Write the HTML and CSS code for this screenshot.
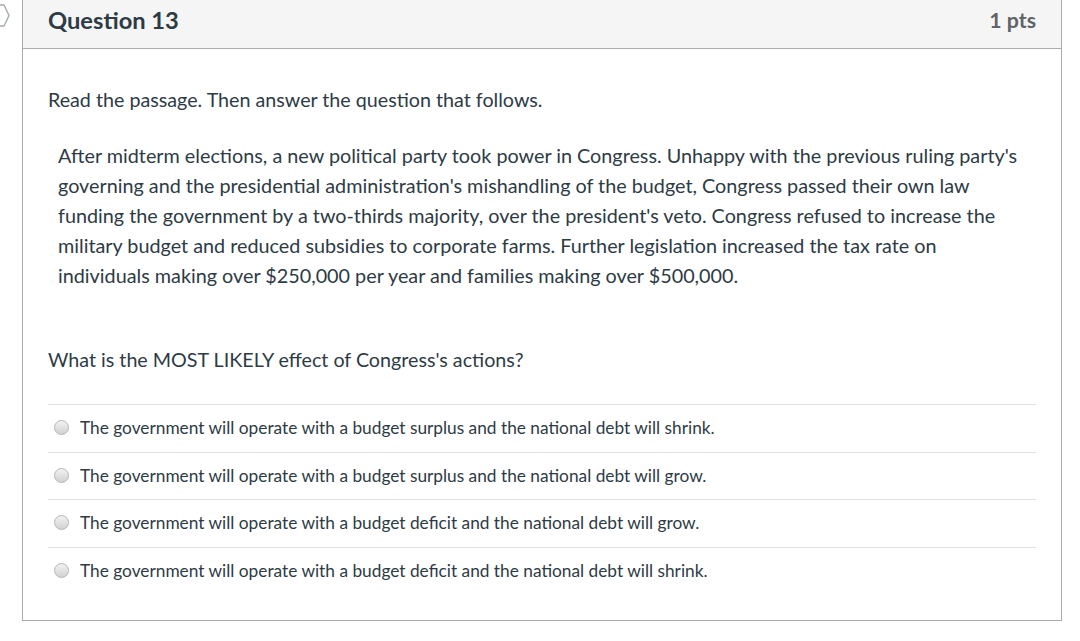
FILE: index.html
```html
<!DOCTYPE html>
<html>
<head>
<meta charset="utf-8">
<link rel="stylesheet" href="styles.css">
</head>
<body>
<div class="page">
  <svg class="nav-icon" width="14" height="32" viewBox="0 0 14 32"><polygon points="-6,5 4,5 9,15.5 4,26 -6,26" fill="none" stroke="#a3abb1" stroke-width="1.4" stroke-linejoin="round"/></svg>
  <div class="card">
    <div class="header">
      <h2 class="title">Question 13</h2>
      <span class="pts">1 pts</span>
    </div>
    <div class="body">
      <p class="intro">Read the passage. Then answer the question that follows.</p>
      <p class="passage">After midterm elections, a new political party took power in Congress. Unhappy with the previous ruling party's governing and the presidential administration's mishandling of the budget, Congress passed their own law funding the government by a two-thirds majority, over the president's veto. Congress refused to increase the military budget and reduced subsidies to corporate farms. Further legislation increased the tax rate on individuals making over $250,000 per year and families making over $500,000.</p>
      <p class="question">What is the MOST LIKELY effect of Congress's actions?</p>
      <div class="answers">
        <label class="answer"><span class="radio"></span>The government will operate with a budget surplus and the national debt will shrink.</label>
        <label class="answer"><span class="radio"></span>The government will operate with a budget surplus and the national debt will grow.</label>
        <label class="answer"><span class="radio"></span>The government will operate with a budget deficit and the national debt will grow.</label>
        <label class="answer last"><span class="radio"></span>The government will operate with a budget deficit and the national debt will shrink.</label>
      </div>
    </div>
  </div>
</div>
</body>
</html>
```
FILE: styles.css
```css
html, body {
  margin: 0;
  padding: 0;
  background: #fff;
}
body {
  font-family: Lato, "Open Sans", sans-serif;
  color: #2d3b45;
}
.page {
  position: relative;
  padding-left: 22px;
  width: 1040px;
}
.nav-icon {
  position: absolute;
  left: 0;
  top: 0;
}
.card {
  border: 1px solid #a9adb0;
  border-top: none;
  width: 1040px;
  height: 621px;
  box-sizing: border-box;
}
.header {
  height: 49px;
  box-sizing: border-box;
  background: #f5f5f5;
  border-bottom: 1px solid #a9adb0;
  display: flex;
  align-items: center;
  justify-content: space-between;
  padding: 0 25px 9px 25px;
}
.title {
  margin: 0;
  font-size: 23.7px;
  font-weight: 700;
  color: #2d3b45;
}
.pts {
  font-size: 21.3px;
  font-weight: 700;
  color: #5f6468;
}
.body {
  padding: 0 25px;
}
.intro {
  margin: 37px 0 0;
  font-size: 19.7px;
  line-height: 28px;
}
.passage {
  margin: 26px 0 0;
  padding-left: 10px;
  padding-right: 12px;
  font-size: 19.8px;
  line-height: 30px;
}
.question {
  margin: 56px 0 0;
  font-size: 19.7px;
  line-height: 28px;
}
.answers {
  margin-top: 30px;
  border-top: 1px solid #dfe2e4;
}
.answer {
  display: flex;
  align-items: center;
  height: 47.7px;
  box-sizing: border-box;
  border-bottom: 1px solid #dfe2e4;
  font-size: 17.3px;
  padding-left: 6px;
  padding-bottom: 2px;
}
.answer.last {
  border-bottom: none;
}
.radio {
  width: 15px;
  height: 15px;
  border-radius: 50%;
  box-sizing: border-box;
  border: 1px solid #b5b5b5;
  background: linear-gradient(#f2f2f2, #d2d2d2);
  margin-right: 11px;
  flex: none;
}
```
